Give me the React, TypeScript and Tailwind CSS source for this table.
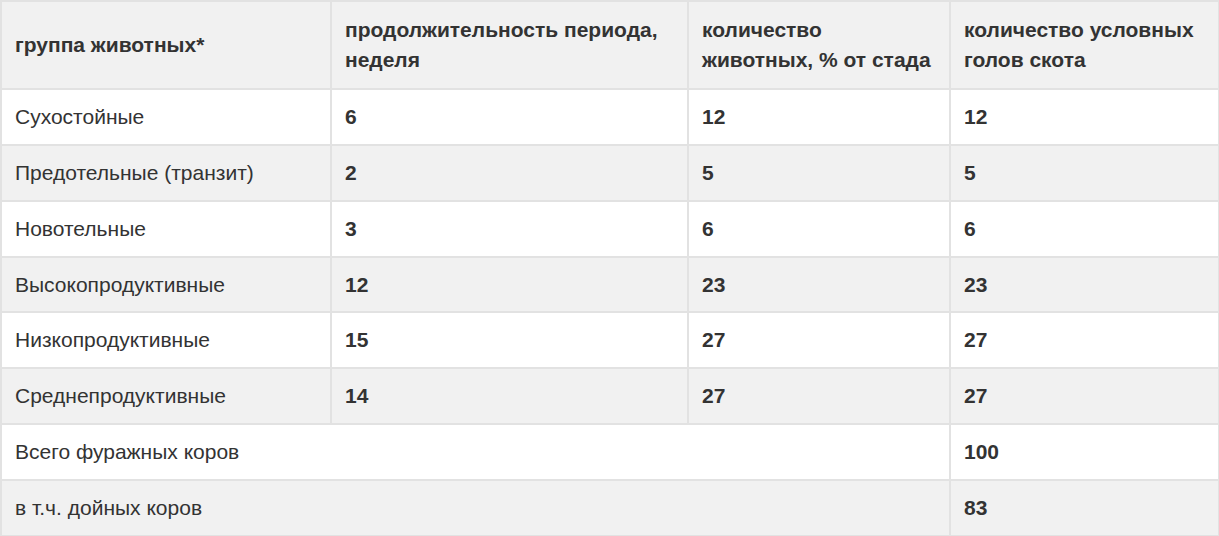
const rows: [string, string, string, string][] = [
  ["Сухостойные", "6", "12", "12"],
  ["Предотельные (транзит)", "2", "5", "5"],
  ["Новотельные", "3", "6", "6"],
  ["Высокопродуктивные", "12", "23", "23"],
  ["Низкопродуктивные", "15", "27", "27"],
  ["Среднепродуктивные", "14", "27", "27"],
];

const cell = "border-2 border-[#e2e2e2] px-[13px] align-middle";

export default function App() {
  return (
    <div className="min-h-screen bg-white font-['Liberation_Sans',Arial,sans-serif] text-[21px] leading-[30px] text-[#333]">
      <table className="w-[1218px] table-fixed border-collapse">
        <colgroup>
          <col className="w-[330px]" />
          <col className="w-[357px]" />
          <col className="w-[262px]" />
          <col className="w-[269px]" />
        </colgroup>
        <thead>
          <tr className="h-[88px] bg-[#f1f1f1] text-left font-bold">
            <th className={cell}>группа животных*</th>
            <th className={cell}>продолжительность периода, неделя</th>
            <th className={cell}>количество животных, % от стада</th>
            <th className={cell}>количество условных голов скота</th>
          </tr>
        </thead>
        <tbody>
          {rows.map((r, i) => (
            <tr
              key={r[0]}
              className={(i === 3 ? "h-[55px] " : "h-[56px] ") + (i % 2 === 0 ? "bg-white" : "bg-[#f1f1f1]")}
            >
              <td className={cell}>{r[0]}</td>
              <td className={cell + " font-bold"}>{r[1]}</td>
              <td className={cell + " font-bold"}>{r[2]}</td>
              <td className={cell + " font-bold"}>{r[3]}</td>
            </tr>
          ))}
          <tr className="h-[56px] bg-white">
            <td className={cell} colSpan={3}>Всего фуражных коров</td>
            <td className={cell + " font-bold"}>100</td>
          </tr>
          <tr className="h-[56px] bg-[#f1f1f1]">
            <td className={cell} colSpan={3}>в т.ч. дойных коров</td>
            <td className={cell + " font-bold"}>83</td>
          </tr>
        </tbody>
      </table>
    </div>
  );
}
